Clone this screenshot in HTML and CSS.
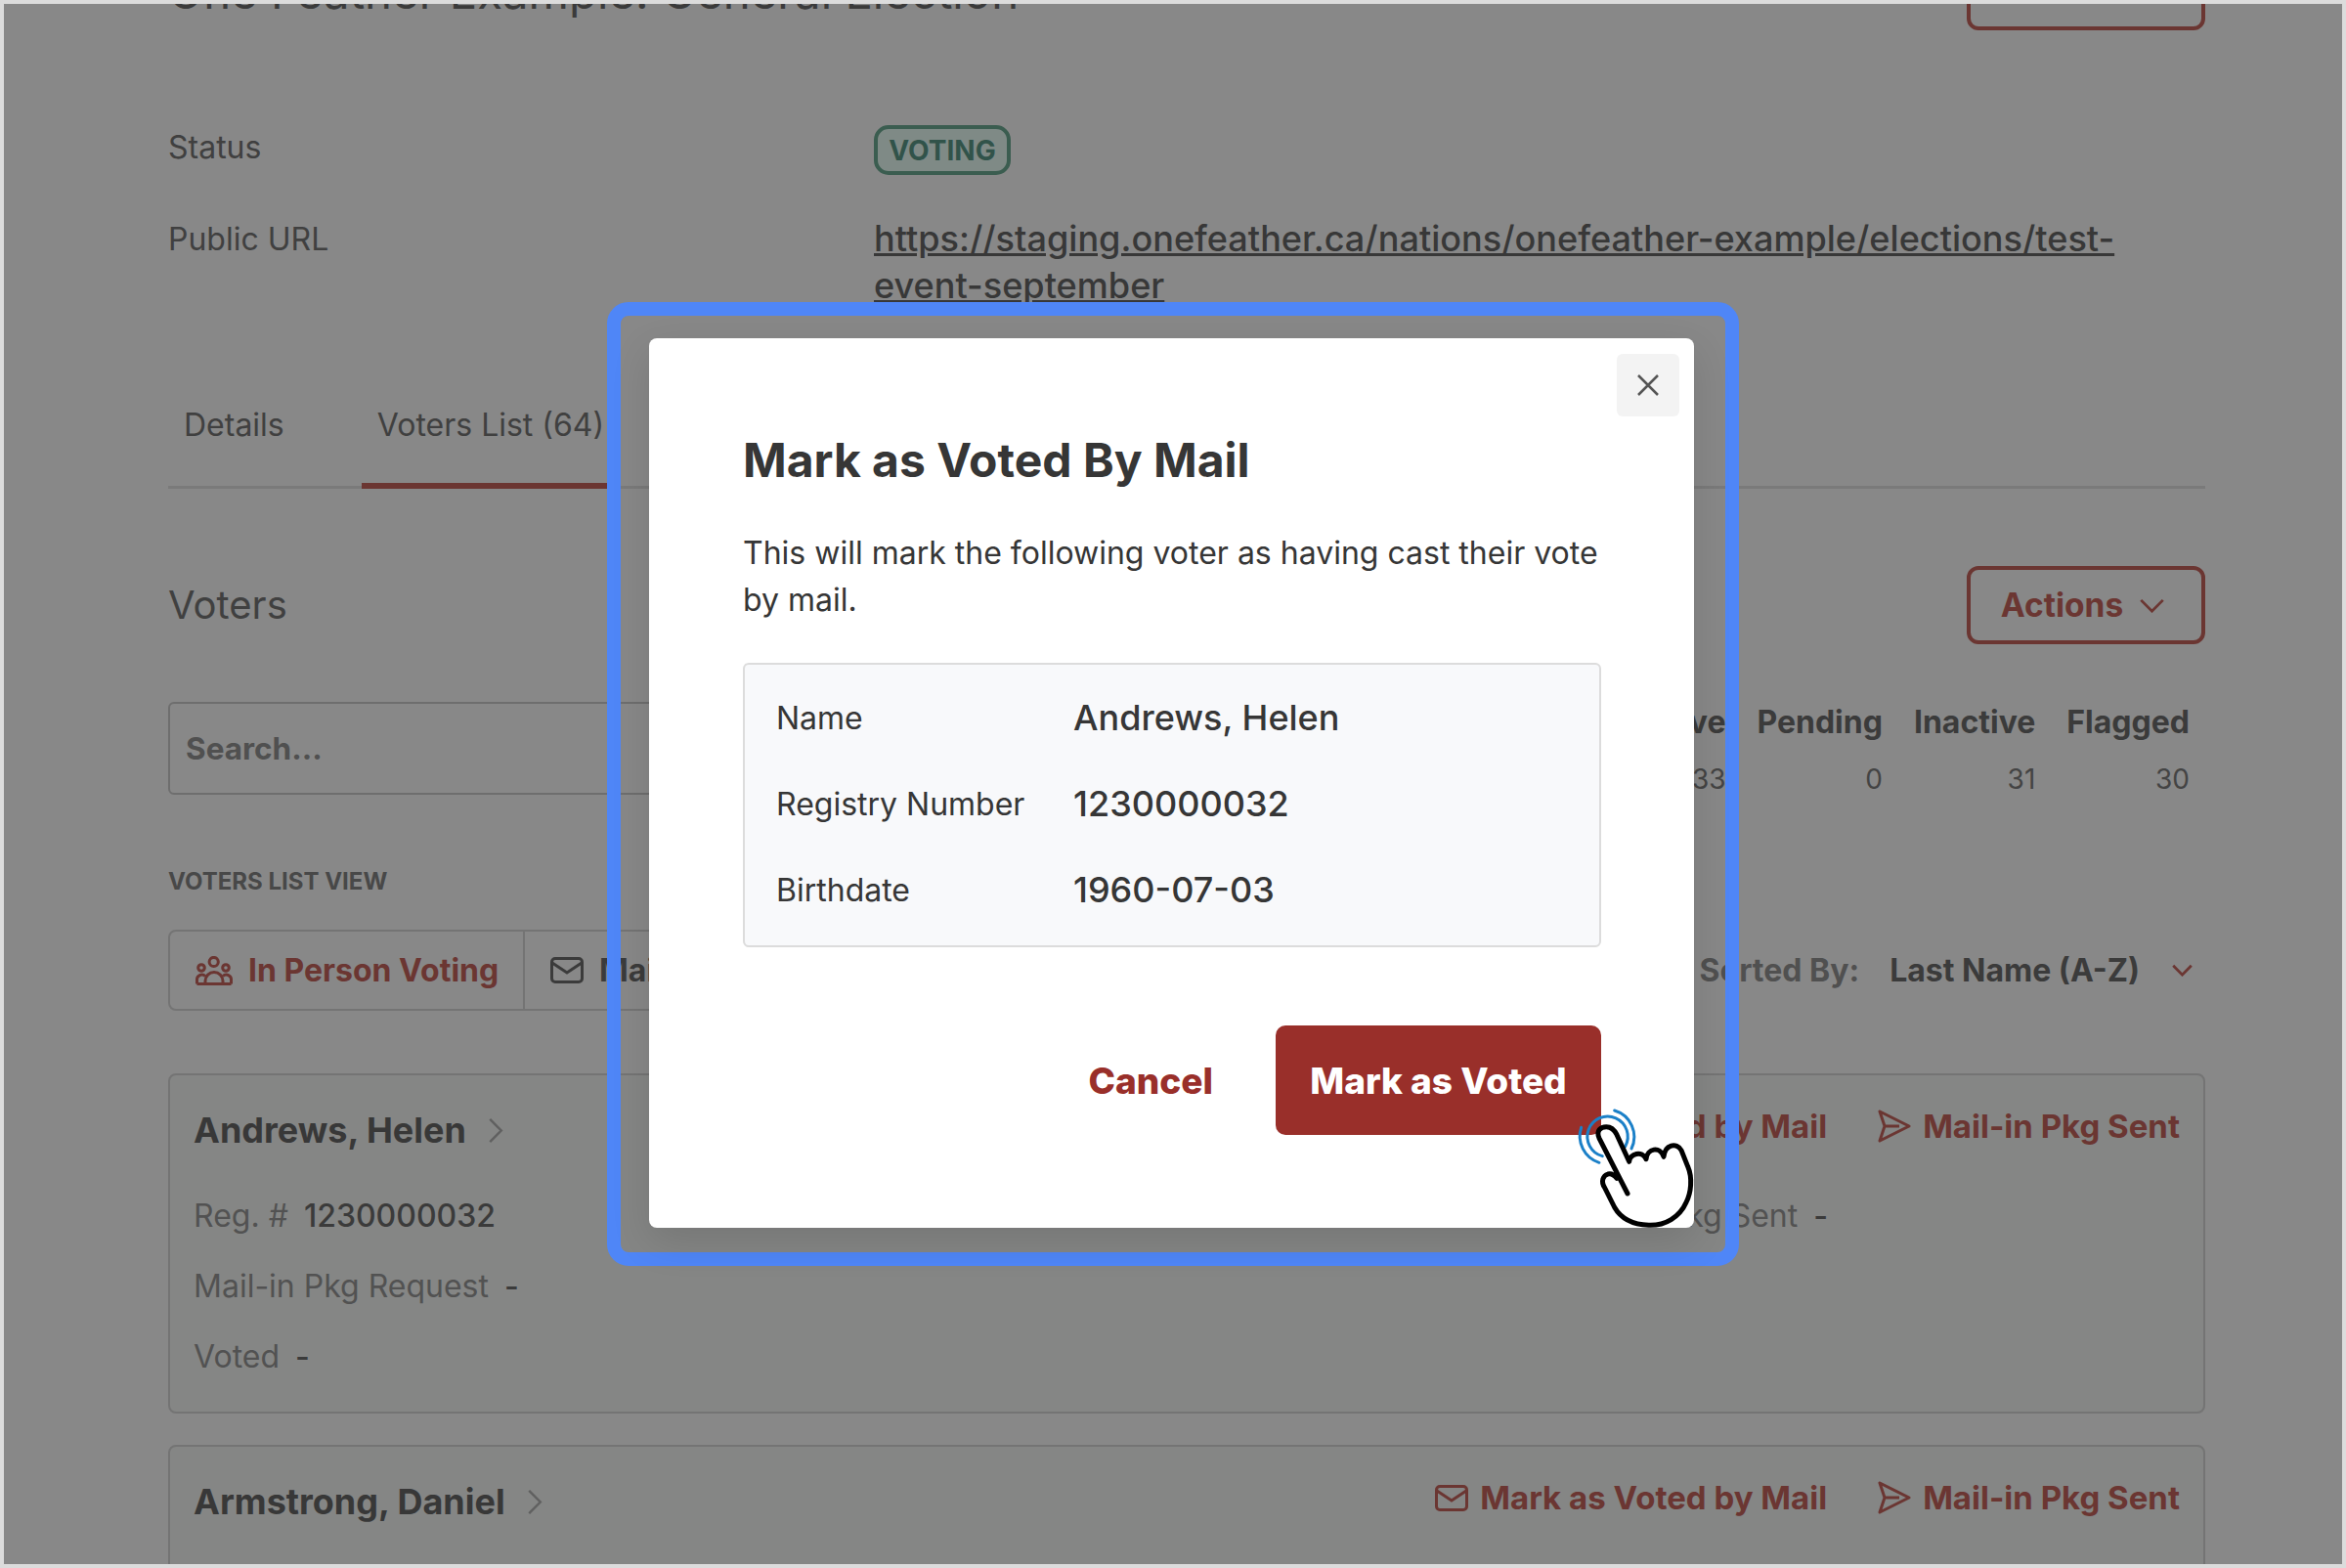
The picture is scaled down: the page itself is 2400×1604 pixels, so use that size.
FILE: index.html
```html
<!DOCTYPE html>
<html lang="en">
<head>
    <meta charset="UTF-8">
    <meta name="viewport" content="width=device-width, initial-scale=1.0">
    <title>Mark as Voted By Mail</title>
    <link rel="stylesheet" href="styles.css">
</head>
<body>
    <div class="frame">
        <div class="page">
            <div class="title-row">
                <h1>One Feather Example: General Election</h1>
                <button class="outline-btn top-btn"></button>
            </div>

            <div class="info-row status-row">
                <span class="info-label">Status</span>
                <span class="badge">VOTING</span>
            </div>
            <div class="info-row url-row">
                <span class="info-label">Public URL</span>
                <a class="public-url">https://staging.onefeather.ca/nations/onefeather-example/elections/test-event-september</a>
            </div>

            <div class="tabs">
                <span class="tab">Details</span>
                <span class="tab tab-active">Voters List (64)</span>
            </div>

            <div class="voters-head">
                <h2>Voters</h2>
                <button class="outline-btn actions-btn">Actions
                    <svg class="chev" viewBox="0 0 28 16"><path d="M2 2l12 12L26 2"/></svg>
                </button>
            </div>

            <div class="search-row">
                <div class="search-box">Search...</div>
                <div class="stats">
                    <div class="stat"><b>Active</b><span>33</span></div>
                    <div class="stat"><b>Pending</b><span>0</span></div>
                    <div class="stat"><b>Inactive</b><span>31</span></div>
                    <div class="stat"><b>Flagged</b><span>30</span></div>
                </div>
            </div>

            <div class="view-label">VOTERS LIST VIEW</div>
            <div class="view-row">
                <div class="view-tabs">
                    <div class="view-tab view-tab-active">
                        <svg class="people-icon" viewBox="0 0 38 30">
                            <circle cx="18.7" cy="6" r="4.6"/>
                            <circle cx="6" cy="12" r="3.3"/>
                            <circle cx="31" cy="12" r="3.3"/>
                            <path d="M10 28.5v-3a9 9 0 0 1 18 0v3"/>
                            <path d="M1.5 28.5h35M1.5 28.5v-4a5 5 0 0 1 8.5-4M36.5 28.5v-4a5 5 0 0 0-8.5-4"/>
                        </svg>
                        In Person Voting
                    </div>
                    <div class="view-tab">
                        <svg class="mail-icon" viewBox="0 0 34 27"><rect x="1.5" y="1.5" width="31" height="24" rx="3.5"/><path d="M2 6l15 10L32 6"/></svg>
                        Mail-in Voting
                    </div>
                </div>
                <div class="sort">
                    <span class="sort-label">Sorted By:</span>
                    <span class="sort-value">Last Name (A-Z)</span>
                    <svg class="chev sort-chev" viewBox="0 0 24 14"><path d="M2 2l10 10L22 2"/></svg>
                </div>
            </div>

            <div class="voter-card">
                <div class="card-head">
                    <div class="voter-name">Andrews, Helen
                        <svg class="name-chev" viewBox="0 0 16 28"><path d="M2 2l12 12L2 26"/></svg>
                    </div>
                    <div class="card-actions">
                        <span class="card-action">
                            <svg class="mail-icon" viewBox="0 0 34 27"><rect x="1.5" y="1.5" width="31" height="24" rx="3.5"/><path d="M2 6l15 10L32 6"/></svg>
                            Mark as Voted by Mail
                        </span>
                        <span class="card-action">
                            <svg class="send-icon" viewBox="0 0 34 34"><path d="M2 2l30 15L2 32l5-15zM7 17h15"/></svg>
                            Mail-in Pkg Sent
                        </span>
                    </div>
                </div>
                <div class="card-line">
                    <span class="field">Reg. #<b>1230000032</b></span>
                    <span class="field field-sent">Mail-in Pkg Sent<b>-</b></span>
                </div>
                <div class="card-line"><span class="field">Mail-in Pkg Request<b>-</b></span></div>
                <div class="card-line"><span class="field">Voted<b>-</b></span></div>
            </div>

            <div class="voter-card">
                <div class="card-head">
                    <div class="voter-name">Armstrong, Daniel
                        <svg class="name-chev" viewBox="0 0 16 28"><path d="M2 2l12 12L2 26"/></svg>
                    </div>
                    <div class="card-actions">
                        <span class="card-action">
                            <svg class="mail-icon" viewBox="0 0 34 27"><rect x="1.5" y="1.5" width="31" height="24" rx="3.5"/><path d="M2 6l15 10L32 6"/></svg>
                            Mark as Voted by Mail
                        </span>
                        <span class="card-action">
                            <svg class="send-icon" viewBox="0 0 34 34"><path d="M2 2l30 15L2 32l5-15zM7 17h15"/></svg>
                            Mail-in Pkg Sent
                        </span>
                    </div>
                </div>
            </div>
        </div>

        <!-- Modal sits over the dimmed page -->
        <div class="highlight"></div>
        <div class="modal">
            <button class="close-btn">
                <svg viewBox="0 0 24 24"><path d="M2 2l20 20M22 2L2 22"/></svg>
            </button>
            <h3>Mark as Voted By Mail</h3>
            <p>This will mark the following voter as having cast their vote by mail.</p>
            <div class="voter-box">
                <div class="box-row"><span>Name</span><strong>Andrews, Helen</strong></div>
                <div class="box-row"><span>Registry Number</span><strong>1230000032</strong></div>
                <div class="box-row"><span>Birthdate</span><strong>1960-07-03</strong></div>
            </div>
            <div class="modal-actions">
                <button class="cancel-btn">Cancel</button>
                <button class="confirm-btn">Mark as Voted</button>
            </div>
        </div>

        <svg class="hand" viewBox="0 0 900 900">
            <g class="hand-rings">
                <path d="M268 488A62 62 0 1 1 338 458"/>
                <path d="M258 508A85 85 0 0 1 203 400"/>
                <path d="M305 348A84 84 0 0 1 357 465"/>
            </g>
            <path class="hand-body" d="M345 603L258 433C248 410 262 398 280 398C295 398 305 408 312 422L350 505C352 480 390 470 402 497C405 465 445 455 456 490C460 452 495 445 510 470L530 520C545 555 540 600 525 630C505 675 460 702 410 700C360 698 325 680 305 645L275 585C262 565 270 548 285 543C298 540 305 548 312 556"/>
        </svg>
    </div>
</body>
</html>
```

FILE: styles.css
```css
* {
    box-sizing: border-box;
}

body {
    margin: 0;
    font-family: Inter, "Liberation Sans", sans-serif;
    background-color: #dcdcdc;
}

button {
    font-family: inherit;
}

.frame {
    position: relative;
    width: 2400px;
    height: 1604px;
    padding: 4px;
    overflow: hidden;
}

.page {
    height: 1596px;
    padding: 0 140px 0 168px;
    background-color: #888888;
    color: #3b3b3b;
    overflow: hidden;
}

/* Title */
.title-row {
    display: flex;
    justify-content: space-between;
    margin-top: -16px;
    height: 42px;
}

h1 {
    margin: -19px 0 0;
    font-size: 47.3px;
    line-height: 46px;
    font-weight: 400;
}

.outline-btn {
    width: 244px;
    background: none;
    border: 4px solid #6b3632;
    border-radius: 12px;
    color: #6b3632;
    font-size: 33.5px;
    font-weight: 700;
}

.top-btn {
    height: 80px;
    margin-top: -37px;
}

/* Status and URL */
.info-row {
    display: flex;
}

.info-label {
    width: 722px;
    font-size: 32px;
    line-height: 48px;
    color: #404040;
}

.status-row {
    margin-top: 98px;
}

.status-row .info-label {
    margin-top: -1px;
}

.badge {
    display: flex;
    align-items: center;
    justify-content: center;
    width: 140px;
    height: 51px;
    border: 4px solid #3b5d50;
    border-radius: 15px;
    background-color: #7f8a86;
    color: #31534a;
    font-size: 28px;
    font-weight: 700;
}

.url-row {
    margin-top: 42px;
}

.public-url {
    width: 1300px;
    font-size: 36.1px;
    line-height: 47.5px;
    font-weight: 500;
    text-decoration: underline;
    color: #383838;
}

/* Tabs */
.tabs {
    display: flex;
    margin-top: 95px;
    height: 89px;
    border-bottom: 3px solid #7a7a7a;
}

.tab {
    padding: 0 16px;
    font-size: 32px;
    line-height: 48px;
    color: #404040;
    white-space: nowrap;
}

.tab-active {
    margin-left: 63px;
    height: 89px;
    border-bottom: 6px solid #6b3632;
}

.voters-head {
    display: flex;
    justify-content: space-between;
    align-items: center;
    margin-top: 79px;
}

h2 {
    margin: -1px 0 0;
    font-size: 40px;
    font-weight: 400;
    color: #404040;
}

.actions-btn {
    display: flex;
    align-items: center;
    justify-content: center;
    gap: 16px;
    height: 80px;
    padding: 0 6px 0 0;
}

.chev {
    width: 27px;
    height: 15px;
    fill: none;
    stroke: #6b3632;
    stroke-width: 3;
}

/* Search and stats */
.search-row {
    display: flex;
    justify-content: space-between;
    margin-top: 59px;
}

.search-box {
    width: 700px;
    height: 95px;
    padding: 0 16px;
    border: 2px solid #6e6e6e;
    border-radius: 6px;
    font-size: 31.5px;
    font-weight: 700;
    line-height: 91px;
    color: #505050;
}

.stats {
    display: flex;
    gap: 32px;
    padding: 0 16px 0 0;
}

.stat {
    display: flex;
    flex-direction: column;
    align-items: flex-end;
    gap: 19px;
    padding-top: 2px;
    font-size: 32px;
    line-height: 38px;
}

.stat b {
    font-weight: 700;
}

.stat span {
    font-size: 28px;
    line-height: 40px;
    color: #444;
}

.view-label {
    margin-top: 59px;
    font-size: 24px;
    line-height: 52px;
    font-weight: 700;
    color: #484848;
}

.view-row {
    display: flex;
    justify-content: space-between;
    align-items: center;
    margin-top: 23px;
}

.view-tabs {
    display: flex;
    height: 83px;
    width: 700px;
    border: 2px solid #747474;
    border-radius: 8px;
}

.view-tab {
    display: flex;
    align-items: center;
    gap: 16px;
    padding: 0 26px;
    font-size: 32px;
    font-weight: 700;
    white-space: nowrap;
}

.view-tab-active {
    width: 363px;
    flex: none;
    border-right: 2px solid #747474;
    color: #6b3632;
}

.people-icon {
    width: 38px;
    height: 30px;
    flex: none;
    fill: none;
    stroke: #6b3632;
    stroke-width: 3;
}

.mail-icon {
    width: 34px;
    height: 27px;
    flex: none;
    fill: none;
    stroke: currentColor;
    stroke-width: 3;
}

.sort {
    display: flex;
    align-items: center;
    font-size: 32px;
    font-weight: 700;
    padding: 0 12px 0 0;
}

.sort-label {
    color: #505050;
    margin-right: 31px;
}

.sort-chev {
    width: 23px;
    height: 13px;
    margin-left: 32px;
}

/* Voter cards */
.voter-card {
    margin-top: 64px;
    height: 348px;
    padding: 0 24px;
    border: 2px solid #747474;
    border-radius: 8px;
    background-color: #858685;
}

.voter-card + .voter-card {
    margin-top: 32px;
}

.card-head {
    display: flex;
    justify-content: space-between;
    align-items: center;
    height: 104px;
    margin-bottom: 3px;
}

.voter-name {
    display: flex;
    align-items: center;
    gap: 22px;
    padding-top: 8px;
    font-size: 36px;
    font-weight: 700;
    color: #383838;
}

.name-chev {
    width: 16px;
    height: 27px;
    fill: none;
    stroke: #606060;
    stroke-width: 2.5;
}

.card-actions {
    display: flex;
    gap: 52px;
}

.card-action {
    display: flex;
    align-items: center;
    gap: 12px;
    font-size: 33px;
    font-weight: 700;
    color: #6b3632;
}

.send-icon {
    width: 34px;
    height: 34px;
    fill: none;
    stroke: currentColor;
    stroke-width: 3;
    stroke-linejoin: round;
}

.card-line {
    display: flex;
    height: 72px;
    align-items: center;
    font-size: 32px;
}

.field {
    color: #525252;
}

.field b {
    margin-left: 16px;
    font-weight: 500;
    color: #3b3b3b;
}

.field-sent {
    margin-left: 1085px;
}

/* Modal */
.highlight {
    position: absolute;
    left: 621px;
    top: 309px;
    width: 1158px;
    height: 986px;
    border: 14px solid #4f86f7;
    border-radius: 22px;
}

.modal {
    position: absolute;
    left: 664px;
    top: 346px;
    width: 1069px;
    height: 910px;
    padding: 96px 96px 0;
    background-color: #ffffff;
    border-radius: 8px;
    color: #363636;
    box-shadow: 0 14px 40px rgba(0, 0, 0, 0.12);
}

.close-btn {
    position: absolute;
    top: 16px;
    right: 15px;
    width: 64px;
    height: 64px;
    display: flex;
    align-items: center;
    justify-content: center;
    padding: 0;
    border: 0;
    border-radius: 6px;
    background-color: #f3f3f3;
}

.close-btn svg {
    width: 24px;
    height: 24px;
    fill: none;
    stroke: #555;
    stroke-width: 2.5;
}

h3 {
    margin: 0;
    font-size: 48px;
    line-height: 58px;
    font-weight: 700;
}

.modal p {
    margin: 42px 0 0;
    font-size: 32px;
    line-height: 47.5px;
}

.voter-box {
    margin-top: 41px;
    width: 878px;
    height: 291px;
    padding: 10px 32px;
    border: 2px solid #dcdcdc;
    border-radius: 6px;
    background-color: #f8f9fb;
}

.box-row {
    display: flex;
    align-items: center;
    height: 88px;
}

.box-row span {
    width: 304px;
    font-size: 32px;
}

.box-row strong {
    font-size: 36px;
    font-weight: 500;
}

.modal-actions {
    display: flex;
    justify-content: flex-end;
    align-items: center;
    gap: 64px;
    width: 878px;
    margin-top: 80px;
}

.cancel-btn,
.confirm-btn {
    border: 0;
    font-size: 37px;
    font-weight: 800;
}

.cancel-btn {
    background: none;
    padding: 0;
    color: #992f2a;
}

.confirm-btn {
    width: 333px;
    height: 112px;
    border-radius: 10px;
    background-color: #992f2a;
    color: #ffffff;
}

/* Pointer hand */
.hand {
    position: absolute;
    left: 1550px;
    top: 1020px;
    width: 300px;
    height: 300px;
    fill: none;
    stroke-linecap: round;
    stroke-linejoin: round;
}

.hand-rings {
    stroke: #1b80c8;
    stroke-width: 9;
}

.hand-body {
    fill: #ffffff;
    stroke: #000000;
    stroke-width: 15;
}
```
